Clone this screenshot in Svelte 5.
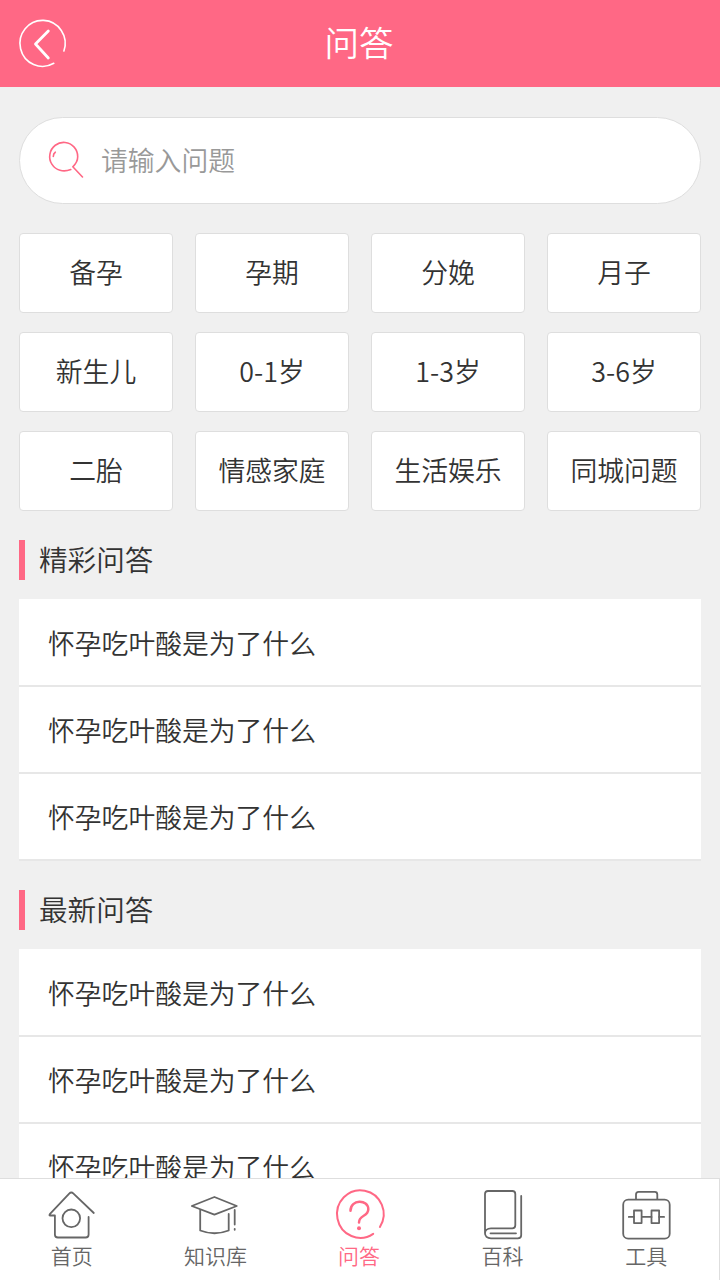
<script lang="ts">
    type Tab = { id: string; label: string };

    const categories: string[] = [
        '备孕', '孕期', '分娩', '月子',
        '新生儿', '0-1岁', '1-3岁', '3-6岁',
        '二胎', '情感家庭', '生活娱乐', '同城问题',
    ];

    const sections = [
        { title: '精彩问答', questions: Array(3).fill('怀孕吃叶酸是为了什么') },
        { title: '最新问答', questions: Array(3).fill('怀孕吃叶酸是为了什么') },
    ];

    const tabs: Tab[] = [
        { id: 'home', label: '首页' },
        { id: 'library', label: '知识库' },
        { id: 'qa', label: '问答' },
        { id: 'wiki', label: '百科' },
        { id: 'tools', label: '工具' },
    ];

    let active = 'qa';
    let query = '';
</script>

<div class="app">
    <header>
        <button class="back" aria-label="返回">
            <svg width="48" height="50" viewBox="0 0 48 50">
                <path d="M45.9 31.9A22.6 23 0 1 0 35.8 44.3" stroke-width="1.6" />
                <path d="M30.3 12L17.5 25L30.3 39" stroke-width="2.8" />
            </svg>
        </button>
        <h1>问答</h1>
    </header>

    <main>
        <label class="search">
            <svg width="36" height="38" viewBox="0 0 36 38">
                <path d="M22.8 28.5C19.5 29.8 15.5 30.2 12 29.3A14 14.2 0 1 1 29.7 15.8C29.7 19.5 27.8 23 24.8 25.8L34.5 36" />
                <path d="M5.3 15.5C5.3 13.5 6 12 7.3 11.2" />
            </svg>
            <input type="text" placeholder="请输入问题" bind:value={query} />
        </label>

        <div class="categories">
            {#each categories as category}
                <button>{category}</button>
            {/each}
        </div>

        {#each sections as section}
            <section>
                <h2>{section.title}</h2>
                <ul>
                    {#each section.questions as question}
                        <li>{question}</li>
                    {/each}
                </ul>
            </section>
        {/each}
    </main>

    <nav>
        {#each tabs as tab}
            <button class:active={active === tab.id} on:click={() => (active = tab.id)}>
                <svg width="50" height="52" viewBox="0 0 50 52">
                    {#if tab.id === 'home'}
                        <path d="M41.6 27V44.5Q41.6 47.5 38.6 47.5H10.9Q7.9 47.5 7.9 44.5V25.5H3.2Q1.9 25.5 2.8 24.2L22.2 3.6Q24.3 1.5 26.5 3.6L46.8 23" />
                        <circle cx="24.3" cy="28.3" r="8.8" />
                    {:else if tab.id === 'library'}
                        <path d="M1.8 16L24.4 7L46.8 16L24.4 24.6Z" />
                        <path d="M10.2 20V40.5Q24.5 46 38.7 40.5V24" />
                        <path d="M44.7 20V34.5M44.7 38.8V39.8" />
                    {:else if tab.id === 'qa'}
                        <path d="M45.9 37A23.3 23.8 0 1 0 39.2 43.9" stroke-width="2" />
                        <path d="M16.5 20.8C16.5 9 34.3 9.2 34.3 19.3C34.3 27 25 24.5 25 32.5" stroke-width="2.5" />
                        <circle class="dot" cx="25" cy="38.2" r="2" />
                    {:else if tab.id === 'wiki'}
                        <path d="M7 43V4Q7 1 10 1H34.3Q37.3 1 37.3 4V35.3Q37.3 38.3 34.3 38.3H13C5 38.3 5 48.3 13 48.3H39.8Q43.2 48.3 43.2 45.3V6" />
                        <path d="M12.5 43.3H38" />
                    {:else}
                        <rect x="2.2" y="9.7" width="46.5" height="39" rx="5" />
                        <path d="M15 9.2V4.4Q15 1.9 17.5 1.9H33.8Q36.3 1.9 36.3 4.4V9.2" />
                        <path d="M7.8 26.9H13M20.8 26.9H30.5M38.1 26.9H43.1" />
                        <rect x="13" y="20.5" width="7.6" height="12.6" />
                        <rect x="30.5" y="20.5" width="7.6" height="12.6" />
                    {/if}
                </svg>
                <span>{tab.label}</span>
            </button>
        {/each}
    </nav>
</div>

<style>
    :global(body) {
        margin: 0;
        background: #f0f0f0;
    }
    .app {
        display: flex;
        flex-direction: column;
        width: 720px;
        height: 1280px;
        overflow: hidden;
        color: #333;
        background: #f0f0f0;
        font-family: 'Noto Sans CJK SC', sans-serif;
        font-weight: 350;
    }
    button {
        padding: 0;
        border: none;
        background: none;
        color: inherit;
        font: inherit;
        cursor: pointer;
    }
    svg {
        display: block;
        flex: none;
        overflow: visible;
        fill: none;
        stroke: currentColor;
        stroke-width: 1.8;
        stroke-linecap: round;
        stroke-linejoin: round;
    }
    header {
        display: grid;
        grid-template-columns: 48px 1fr 48px;
        align-items: center;
        flex: none;
        box-sizing: border-box;
        height: 87px;
        padding: 0 20px 0 18px;
        background: #ff6885;
        color: #fff;
    }
    h1 {
        margin: 0;
        padding-bottom: 5px;
        font-size: 34.5px;
        font-weight: 350;
        line-height: 82px;
        text-align: center;
    }
    main {
        flex: 1;
        min-height: 0;
        padding: 30px 19px 0;
        overflow: hidden;
    }
    .search {
        display: flex;
        align-items: center;
        box-sizing: border-box;
        height: 87px;
        padding: 0 28px 2px;
        border: 1px solid #dedede;
        border-radius: 44px;
        background: #fff;
        color: #ff6885;
    }
    .search svg {
        stroke-width: 1.6;
    }
    input {
        flex: 1;
        margin-left: 17px;
        padding: 0;
        border: none;
        outline: none;
        background: none;
        color: #333;
        font: inherit;
        font-size: 26.8px;
    }
    input::placeholder {
        color: #999;
        opacity: 1;
    }
    .categories {
        display: grid;
        grid-template-columns: repeat(4, 154px);
        grid-auto-rows: 80px;
        justify-content: space-between;
        row-gap: 19px;
        margin-top: 29px;
    }
    .categories button {
        padding-bottom: 3px;
        border: 1px solid #dedede;
        border-radius: 4px;
        background: #fff;
        font-size: 26.8px;
    }
    section {
        margin-top: 29px;
    }
    h2 {
        box-sizing: border-box;
        height: 40px;
        margin: 0 0 19px;
        padding-left: 14px;
        border-left: 6px solid #ff6885;
        font-size: 28.6px;
        font-weight: 350;
        line-height: 38px;
    }
    ul {
        margin: 0;
        padding: 1px 0 0;
        background: #fff;
        list-style: none;
    }
    li {
        box-sizing: border-box;
        height: 87px;
        padding-left: 29px;
        border-bottom: 2px solid #e7e7e7;
        font-size: 26.8px;
        line-height: 85px;
    }
    nav {
        display: flex;
        flex: none;
        box-sizing: border-box;
        height: 102px;
        padding-right: 1px;
        border-top: 1px solid #dedede;
        border-right: 1px solid #dedede;
        background: #fff;
        color: #666;
    }
    nav button {
        display: flex;
        flex: 1;
        flex-direction: column;
        align-items: center;
        padding-top: 11px;
        font-size: 21px;
        line-height: 26px;
    }
    nav .active {
        color: #ff6885;
    }
    .dot {
        fill: currentColor;
        stroke: none;
    }
</style>
